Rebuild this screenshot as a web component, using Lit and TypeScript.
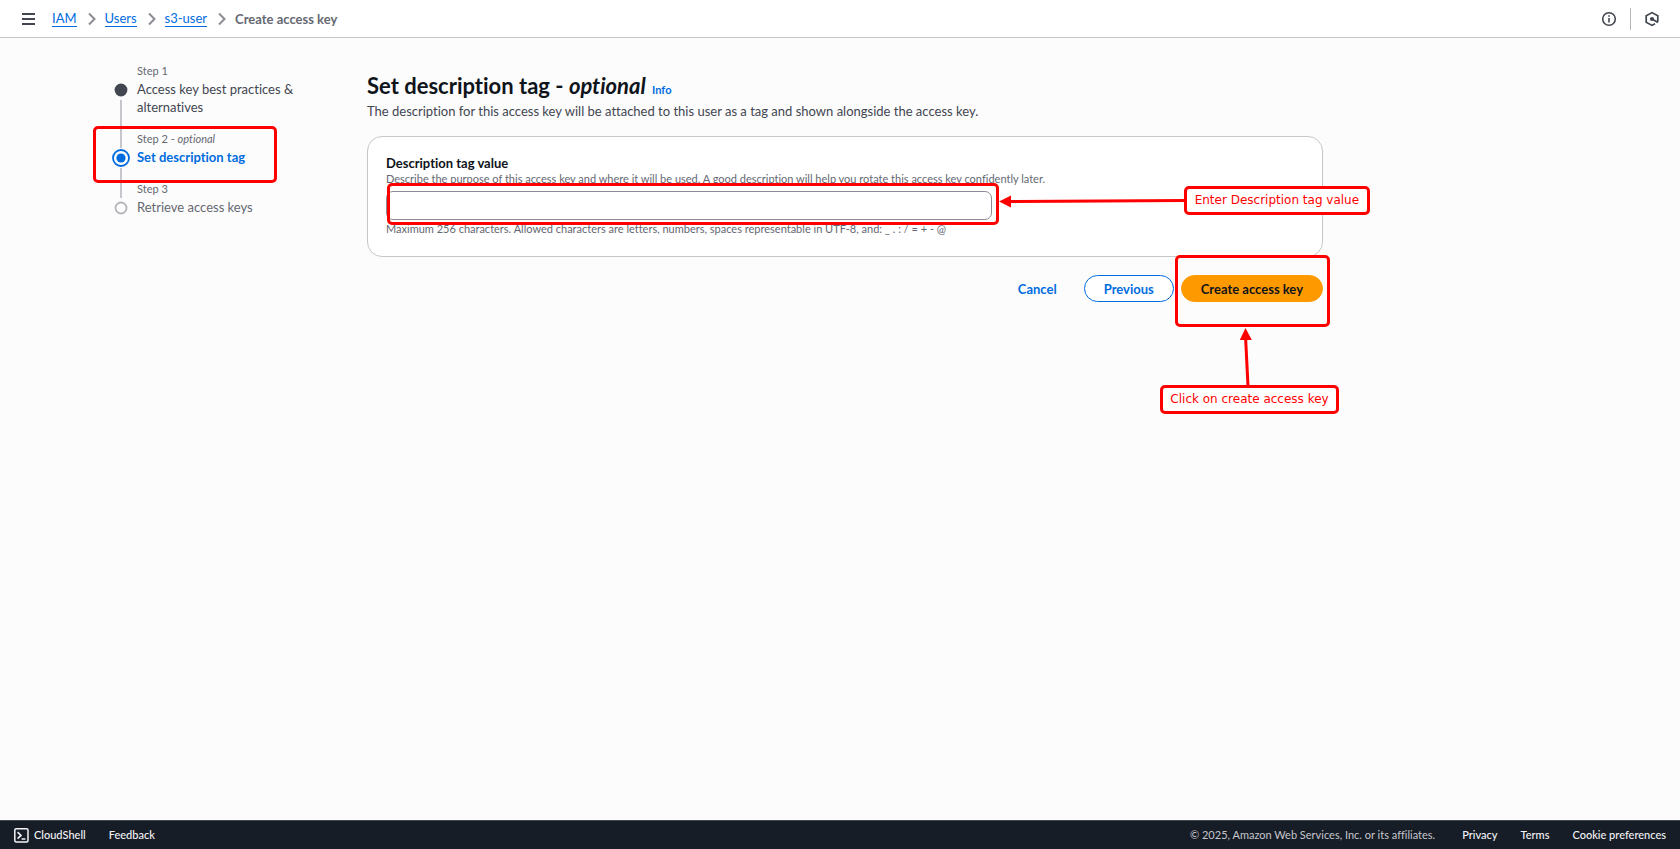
import { LitElement, html, svg, css, nothing } from "lit";
import { customElement, state } from "lit/decorators.js";
import { classMap } from "lit/directives/class-map.js";

interface Step {
  label: string;
  optional?: boolean;
  title: string;
  status: "done" | "current" | "todo";
}

const STEPS: Step[] = [
  { label: "Step 1", title: "Access key best practices & alternatives", status: "done" },
  { label: "Step 2", optional: true, title: "Set description tag", status: "current" },
  { label: "Step 3", title: "Retrieve access keys", status: "todo" },
];

const CRUMBS = ["IAM", "Users", "s3-user"];

const chevron = svg`<svg class="chevron" width="8" height="14" viewBox="0 0 8 14" aria-hidden="true">
  <path d="M1 1.5 6.5 7 1 12.5" fill="none" stroke="#8c8c94" stroke-width="2"/></svg>`;

@customElement("top-bar")
export class TopBar extends LitElement {
  static styles = css`
    :host {
      display: flex;
      align-items: center;
      justify-content: space-between;
      box-sizing: border-box;
      height: 38px;
      padding: 0 20px 0 22px;
      background: #fff;
      border-bottom: 1px solid #c6c6cd;
    }
    button {
      display: grid;
      padding: 0;
      border: 0;
      background: none;
      color: #424650;
      cursor: pointer;
    }
    nav,
    ol,
    li,
    .tools {
      display: flex;
      align-items: center;
    }
    nav {
      gap: 16px;
    }
    ol {
      margin: 0;
      padding: 0;
      list-style: none;
      gap: 9px;
    }
    li {
      gap: 11px;
      line-height: 16px;
    }
    a {
      color: #006ce0;
      text-decoration: none;
      border-bottom: 1px solid #006ce0;
    }
    .here {
      color: #656871;
      font-weight: 700;
    }
    .tools {
      gap: 13px;
    }
    .rule {
      width: 1px;
      height: 22px;
      background: #b4b4bb;
    }
  `;

  render() {
    return html`
      <nav aria-label="Breadcrumbs">
        <button aria-label="Open navigation">
          <svg width="14" height="14" viewBox="0 0 14 14">
            <path d="M0 2h13M0 7h13M0 12h13" fill="none" stroke="currentColor" stroke-width="2" />
          </svg>
        </button>
        <ol>
          ${CRUMBS.map((c) => html`<li><a href="#">${c}</a>${chevron}</li>`)}
          <li class="here" aria-current="page">Create access key</li>
        </ol>
      </nav>
      <div class="tools">
        <button aria-label="Info">
          <svg width="16" height="16" viewBox="0 0 16 16" fill="none" stroke="currentColor">
            <circle cx="8" cy="8" r="6.3" stroke-width="1.6" />
            <path d="M8 7v4.6M8 4.2v1.6" stroke-width="1.6" />
          </svg>
        </button>
        <span class="rule"></span>
        <button aria-label="Diagnostics">
          <svg width="16" height="16" viewBox="0 0 16 16" fill="none" stroke="currentColor">
            <path d="M13.8 10.8V4.8L8 1.6 2.2 4.8v6.4L8 14.4l3-1.7" stroke-width="1.7" />
            <path d="M8 8l6 3.4" stroke-width="1.7" />
            <circle cx="8" cy="8" r="2.1" fill="currentColor" stroke="none" />
          </svg>
        </button>
      </div>
    `;
  }
}

@customElement("wizard-steps")
export class WizardSteps extends LitElement {
  static styles = css`
    :host {
      display: block;
    }
    ol {
      margin: 0;
      padding: 0;
      list-style: none;
    }
    li {
      position: relative;
      display: grid;
      grid-template-columns: 18px 1fr;
      column-gap: 7px;
      line-height: 18px;
    }
    .text {
      padding-bottom: 14px;
    }
    .track {
      display: flex;
      flex-direction: column;
      align-items: center;
    }
    .lead,
    .tail {
      width: 2px;
      background: #c6c6cd;
    }
    .lead {
      height: 18px;
      margin-bottom: 1px;
    }
    .tail {
      flex: 1;
      margin-top: 1px;
    }
    li:first-child .lead,
    li:last-child .tail {
      background: none;
    }
    .slot {
      display: grid;
      place-items: center;
      width: 18px;
      height: 18px;
    }
    .label {
      font-size: 11px;
      color: #656871;
    }
    .title {
      color: #424650;
    }
    .todo .title {
      color: #656871;
    }
    .current .title {
      color: #006ce0;
      font-weight: 700;
    }
    .mark {
      position: absolute;
      z-index: 1;
      left: -19px;
      top: -4px;
      width: 184px;
      height: 57px;
      box-sizing: border-box;
      border: 3px solid #f00;
      border-radius: 5px;
      pointer-events: none;
    }
  `;

  private dot(status: Step["status"]) {
    if (status === "done") {
      return html`<svg width="18" height="18"><circle cx="9" cy="9" r="6.4" fill="#424650" /></svg>`;
    }
    if (status === "current") {
      return html`<svg width="18" height="18">
        <circle cx="9" cy="9" r="8" fill="none" stroke="#006ce0" stroke-width="1.8" />
        <circle cx="9" cy="9" r="4.6" fill="#006ce0" />
      </svg>`;
    }
    return html`<svg width="18" height="18">
      <circle cx="9" cy="9" r="5.5" fill="none" stroke="#b4b4bb" stroke-width="1.8" />
    </svg>`;
  }

  render() {
    return html`<ol>
      ${STEPS.map(
        (s) => html`<li
          class=${classMap({ [s.status]: true })}
          aria-current=${s.status === "current" ? "step" : nothing}
        >
          <div class="track">
            <span class="lead"></span><span class="slot">${this.dot(s.status)}</span
            ><span class="tail"></span>
          </div>
          <div class="text">
            <div class="label">${s.label}${s.optional ? html` - <i>optional</i>` : nothing}</div>
            <div class="title">${s.title}</div>
          </div>
          ${s.status === "current" ? html`<span class="mark"></span>` : nothing}
        </li>`
      )}
    </ol>`;
  }
}

@customElement("tag-form")
export class TagForm extends LitElement {
  @state() private value = "";

  static styles = css`
    :host {
      display: block;
    }
    h1 {
      margin: 0 0 2px;
      font-size: 22px;
      line-height: 28px;
      color: #0f141a;
    }
    h1 a {
      margin-left: 1px;
      font-size: 11px;
      line-height: 14px;
      color: #006ce0;
      text-decoration: none;
    }
    p {
      margin: 0;
      line-height: 18px;
      color: #424650;
    }
    .card {
      margin-top: 16px;
      padding: 17px 18px 20px;
      background: #fff;
      border: 1px solid #c6c6cd;
      border-radius: 15px;
    }
    label {
      display: block;
      line-height: 18px;
      font-weight: 700;
      color: #0f141a;
    }
    .hint {
      font-size: 11px;
      line-height: 14px;
      color: #656871;
    }
    .field {
      position: relative;
      width: 66%;
      margin: 5px 0 2px;
    }
    input {
      display: block;
      box-sizing: border-box;
      width: 100%;
      height: 29px;
      padding: 0 10px;
      border: 1px solid #8c8c94;
      border-radius: 7px;
      background: #fff;
      font: inherit;
      color: #0f141a;
      outline: none;
    }
    .actions {
      display: flex;
      justify-content: flex-end;
      gap: 7px;
      margin-top: 18px;
    }
    button {
      display: block;
      height: 27px;
      padding: 0 19px;
      border: 1px solid transparent;
      border-radius: 14px;
      background: none;
      font: inherit;
      font-weight: 700;
      line-height: 24px;
      color: #006ce0;
      cursor: pointer;
    }
    .normal {
      border-color: #006ce0;
      background: #fff;
    }
    .primary {
      border-color: #ff9900;
      background: #ff9900;
      color: #0f141a;
    }
    .submit {
      position: relative;
    }
    .mark,
    .note {
      position: absolute;
      box-sizing: border-box;
      border: 3px solid #f00;
      border-radius: 5px;
      pointer-events: none;
    }
    .note {
      height: 29px;
      background: #fff;
      color: #f00;
      font: 12px/22px "DejaVu Sans", sans-serif;
      text-align: center;
      white-space: nowrap;
    }
    .arrow {
      position: absolute;
      pointer-events: none;
    }
    .field .mark {
      inset: -8px -7px -5px 1px;
    }
    .field .arrow {
      left: calc(100% + 7px);
      top: 3px;
    }
    .field .note {
      left: calc(100% + 192px);
      top: -5px;
      width: 186px;
    }
    .submit .mark {
      inset: -20px -7px -25px -6px;
    }
    .submit .arrow {
      left: 58px;
      top: 53px;
    }
    .submit .note {
      right: -16px;
      top: 110px;
      width: 179px;
    }
  `;

  private onInput(e: Event) {
    this.value = (e.target as HTMLInputElement).value;
  }

  render() {
    return html`
      <h1>Set description tag - <i>optional</i> <a href="#">Info</a></h1>
      <p>
        The description for this access key will be attached to this user as a tag and shown
        alongside the access key.
      </p>
      <section class="card">
        <label for="tag">Description tag value</label>
        <div class="hint" id="about">
          Describe the purpose of this access key and where it will be used. A good description will
          help you rotate this access key confidently later.
        </div>
        <div class="field">
          <input
            id="tag"
            type="text"
            maxlength="256"
            aria-describedby="about limits"
            .value=${this.value}
            @input=${this.onInput}
          />
          <span class="mark"></span>
          <svg class="arrow" width="186" height="14" viewBox="0 0 186 14">
            <path d="M10 7.5 186 6.5" stroke="#f00" stroke-width="3" />
            <path d="M0 7.5 12 1.5v12z" fill="#f00" />
          </svg>
          <span class="note">Enter Description tag value</span>
        </div>
        <div class="hint" id="limits">
          Maximum 256 characters. Allowed characters are letters, numbers, spaces representable in
          UTF-8, and: _ . : / = + - @
        </div>
      </section>
      <div class="actions">
        <button>Cancel</button>
        <button class="normal">Previous</button>
        <div class="submit">
          <button class="primary">Create access key</button>
          <span class="mark"></span>
          <svg class="arrow" width="14" height="58" viewBox="0 0 14 58">
            <path d="M6.5 8 9 58" stroke="#f00" stroke-width="3" />
            <path d="M6.5 0 .8 12h12z" fill="#f00" />
          </svg>
          <span class="note">Click on create access key</span>
        </div>
      </div>
    `;
  }
}

@customElement("bottom-bar")
export class BottomBar extends LitElement {
  static styles = css`
    :host {
      display: flex;
      align-items: center;
      justify-content: space-between;
      box-sizing: border-box;
      height: 29px;
      padding: 0 14px;
      background: #161d26;
      border-top: 1px solid #424650;
      font-size: 11px;
      color: #c6c6cd;
    }
    div {
      display: flex;
      align-items: center;
      gap: 23px;
    }
    .legal {
      margin-right: 4px;
    }
    button,
    a {
      display: flex;
      align-items: center;
      gap: 5px;
      padding: 0;
      border: 0;
      background: none;
      font: inherit;
      font-weight: 500;
      color: #f3f3f7;
      text-decoration: none;
      cursor: pointer;
    }
  `;

  render() {
    return html`
      <div>
        <button>
          <svg width="15" height="15" viewBox="0 0 15 15" fill="none" stroke="currentColor">
            <rect x=".8" y=".8" width="13.2" height="13.2" rx="1.5" stroke-width="1.5" />
            <path d="M3.6 4.2 7 7.4l-3.4 3.2M7.6 11h3.8" stroke-width="1.6" />
          </svg>
          CloudShell
        </button>
        <a href="#">Feedback</a>
      </div>
      <div>
        <span class="legal">© 2025, Amazon Web Services, Inc. or its affiliates.</span>
        <a href="#">Privacy</a>
        <a href="#">Terms</a>
        <a href="#">Cookie preferences</a>
      </div>
    `;
  }
}

@customElement("app-root")
export class AppRoot extends LitElement {
  static styles = css`
    :host {
      display: flex;
      flex-direction: column;
      min-height: 100vh;
      background: #fcfcfd;
      font: 13px/18px Lato, "Noto Sans", sans-serif;
      font-variant-ligatures: none;
    }
    main {
      flex: 1;
      display: grid;
      grid-template-columns: 200px minmax(0, 956px);
      column-gap: 55px;
      align-content: start;
      padding: 24px 112px;
    }
    tag-form {
      padding-top: 10px;
    }
  `;

  render() {
    return html`
      <top-bar></top-bar>
      <main>
        <wizard-steps></wizard-steps>
        <tag-form></tag-form>
      </main>
      <bottom-bar></bottom-bar>
    `;
  }
}
